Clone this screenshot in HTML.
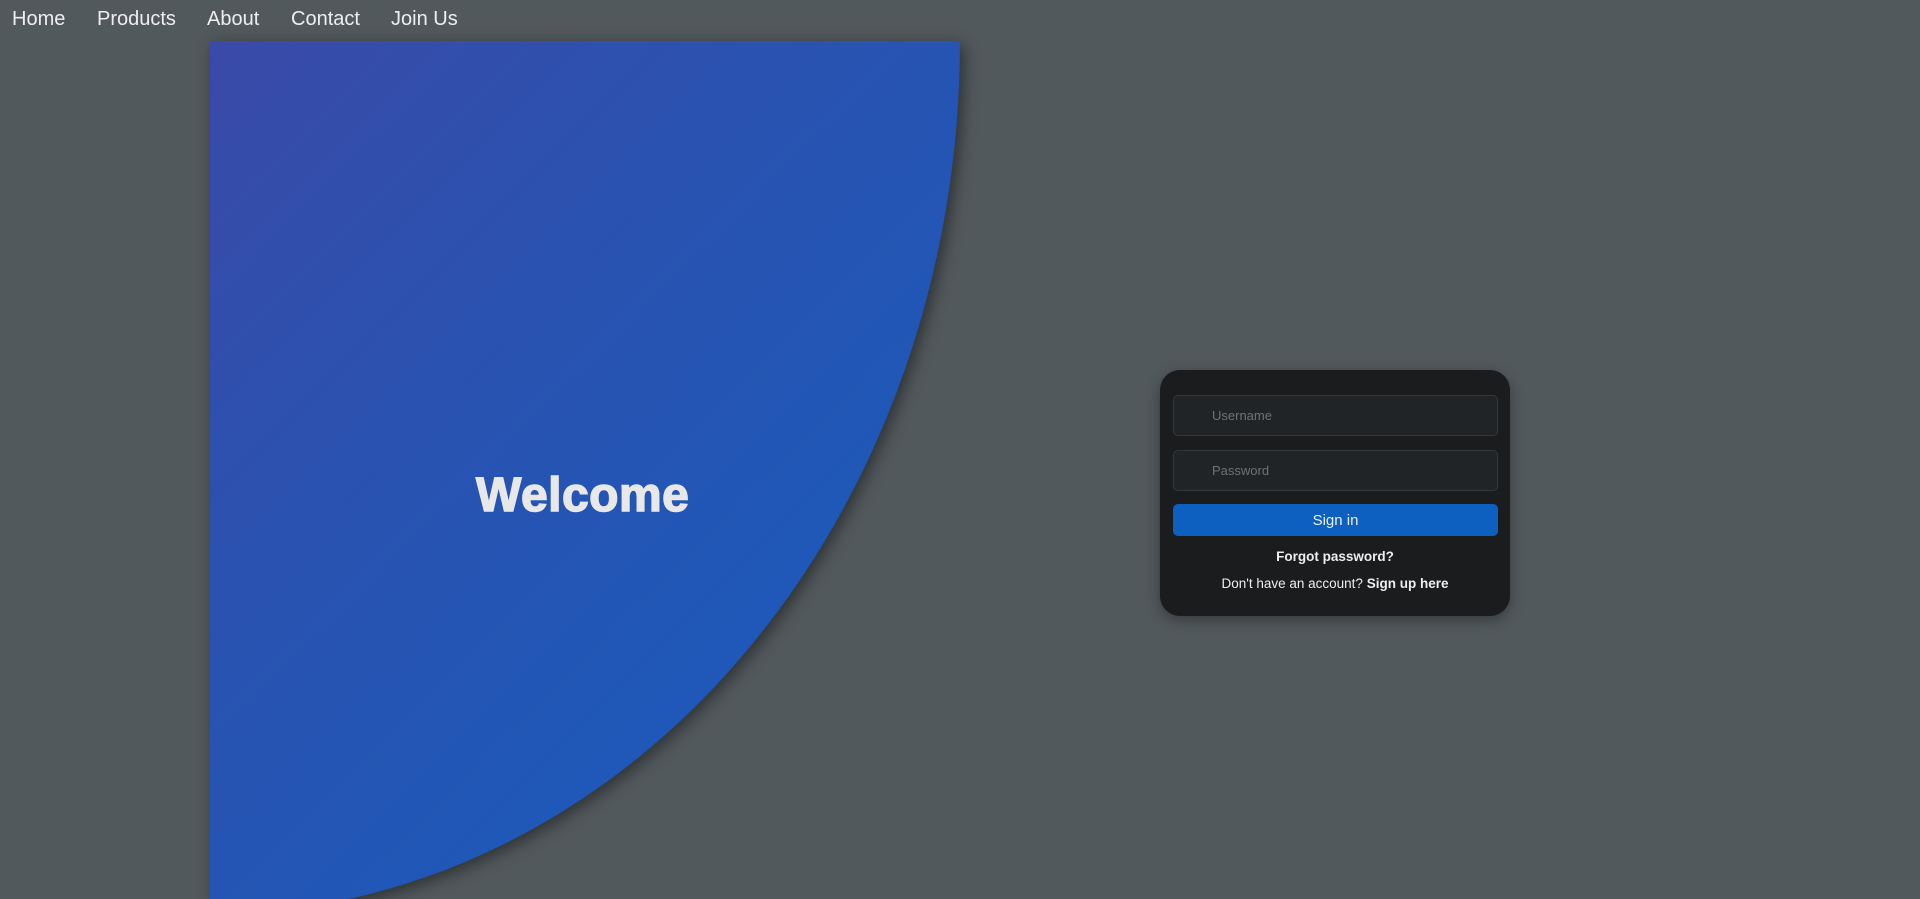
<!DOCTYPE html>
<html><head><meta charset="utf-8"><style>
html,body{margin:0;padding:0;width:1920px;height:899px;overflow:hidden;background:#52595c;font-family:"Liberation Sans",Arial,sans-serif;}
nav{position:absolute;left:12px;top:8px;font-size:20px;color:#eee;}
nav span{position:absolute;white-space:nowrap;top:0}
.wrap{position:absolute;left:210px;top:41px;width:780px;height:858px;filter:drop-shadow(4px 4px 8px rgba(0,0,0,.45));}
.blue{width:750px;height:858px;background:linear-gradient(135deg,#3a4aa8 0%,#2a52b0 35%,#1f58b8 70%,#1a5cbc 100%);clip-path:ellipse(750px 873px at 0 0);}
.welcome{position:absolute;left:476px;top:468px;font-size:48px;font-weight:bold;color:#e8e8e8;-webkit-text-stroke:1.5px #e8e8e8;letter-spacing:0.5px}
.card{position:absolute;left:1160px;top:370px;width:350px;height:246px;background:#1b1c1e;border-radius:20px;box-shadow:0 4px 14px rgba(0,0,0,.35);}
.inp{position:absolute;left:13px;background:#212427;border:1px solid #34383b;border-radius:5px;color:#6e7276;font-size:13px;line-height:39px;padding-left:38px;box-sizing:border-box;width:325px;height:41px}
.btn{position:absolute;left:13px;top:134px;width:325px;height:32px;background:#0d60bf;border-radius:5px;color:#e8eef5;font-size:15px;text-align:center;line-height:34px}
.t{position:absolute;left:0;width:350px;text-align:center;color:#eee;font-size:13.5px}
</style></head><body>
<nav><span style="left:0">Home</span><span style="left:85px">Products</span><span style="left:195px">About</span><span style="left:279px">Contact</span><span style="left:379px">Join Us</span></nav>
<div class="wrap"><div class="blue"></div></div>
<div class="welcome">Welcome</div>
<div class="card">
<div class="inp" style="top:25px">Username</div>
<div class="inp" style="top:80px">Password</div>
<div class="btn">Sign in</div>
<div class="t" style="top:179px;font-weight:bold">Forgot password?</div>
<div class="t" style="top:206px">Don't have an account? <b>Sign up here</b></div>
</div>
</body></html>
